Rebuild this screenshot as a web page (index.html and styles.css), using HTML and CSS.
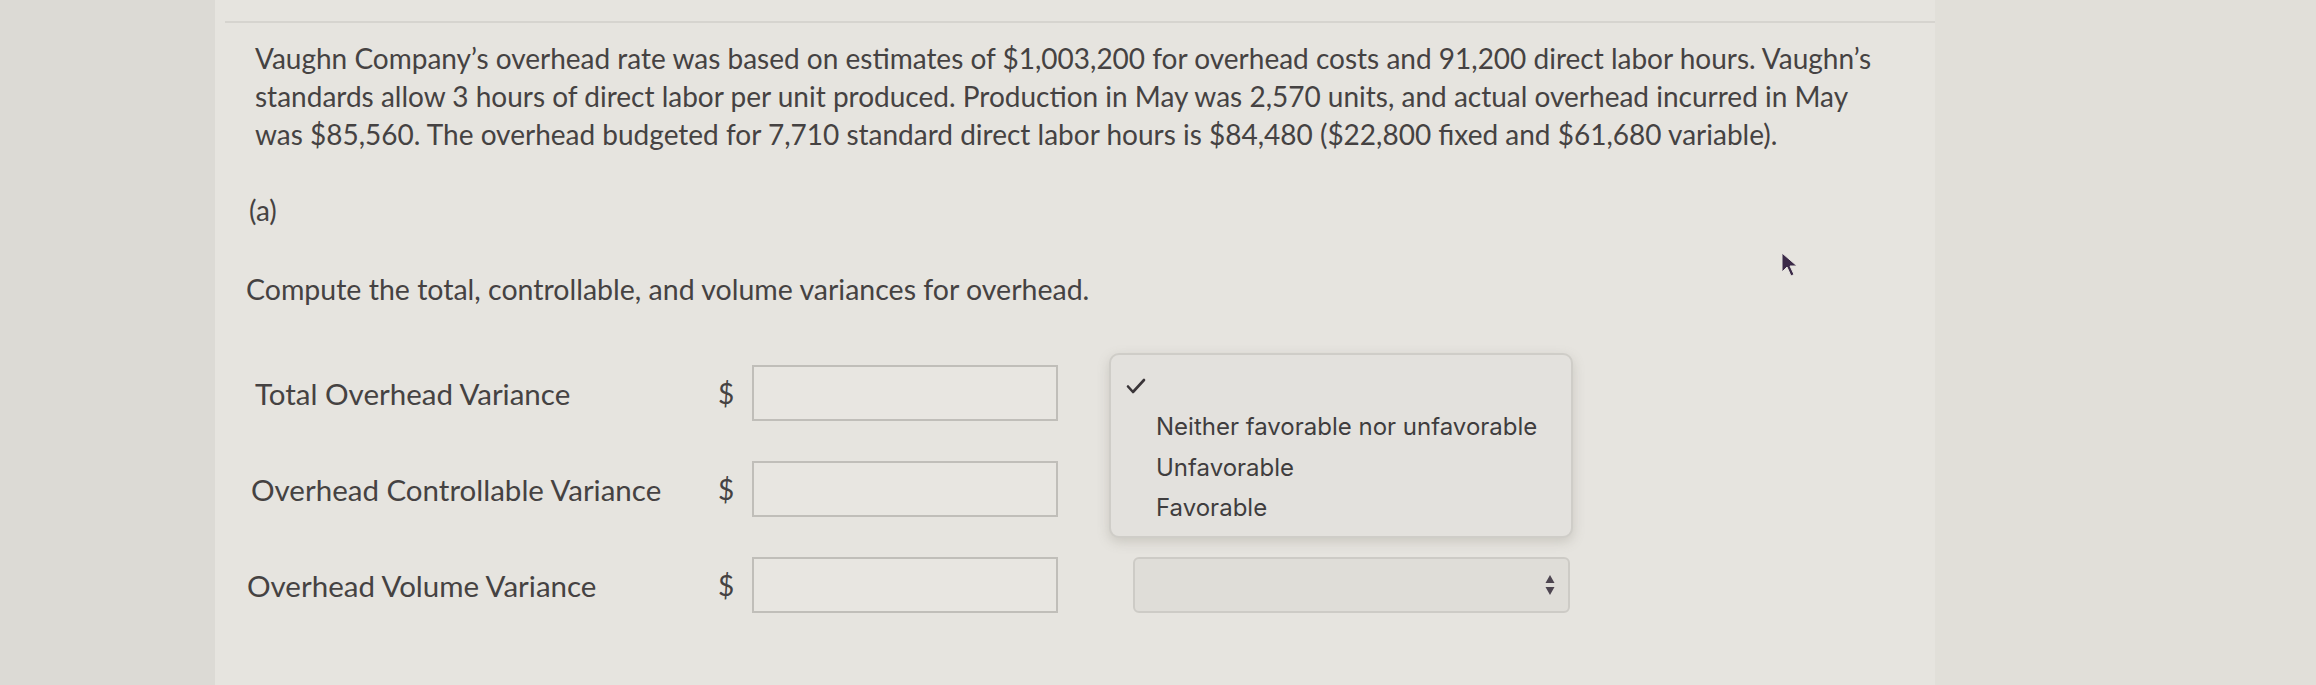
FILE: index.html
```html
<!DOCTYPE html>
<html lang="en">
<head>
<meta charset="utf-8">
<title>Overhead Variances</title>
<link rel="stylesheet" href="styles.css">
</head>
<body>
<div class="screen">
  <div class="strip-left"></div>
  <main class="panel">
    <div class="panel-inner">
      <p class="problem">Vaughn Company’s overhead rate was based on estimates of $1,003,200 for overhead costs and 91,200 direct labor hours. Vaughn’s<br>standards allow 3 hours of direct labor per unit produced. Production in May was 2,570 units, and actual overhead incurred in May<br>was $85,560. The overhead budgeted for 7,710 standard direct labor hours is $84,480 ($22,800 fixed and $61,680 variable).</p>
      <p class="part">(a)</p>
      <p class="instr">Compute the total, controllable, and volume variances for overhead.</p>
      <div class="rows">
        <div class="row">
          <span class="label">Total Overhead Variance</span>
          <span class="cur">$</span>
          <span class="input"></span>
          <span class="select"></span>
        </div>
        <div class="row row-2">
          <span class="label">Overhead Controllable Variance</span>
          <span class="cur">$</span>
          <span class="input"></span>
          <span class="select"></span>
        </div>
        <div class="row row-3">
          <span class="label">Overhead Volume Variance</span>
          <span class="cur">$</span>
          <span class="input"></span>
          <span class="select"><svg class="arrows" width="10" height="22" viewBox="0 0 10 22"><path d="M5 1 L9.5 9 L0.5 9 Z M5 21 L9.5 13 L0.5 13 Z" fill="#4d4550"/></svg></span>
        </div>
        <div class="menu">
          <div class="menu-item checked"><svg class="check" width="20" height="16" viewBox="0 0 20 16"><path d="M2 8.5 L7 14 L18 2" fill="none" stroke="#3a3538" stroke-width="2.6" stroke-linecap="round" stroke-linejoin="round"/></svg></div>
          <div class="menu-item">Neither favorable nor unfavorable</div>
          <div class="menu-item">Unfavorable</div>
          <div class="menu-item">Favorable</div>
        </div>
      </div>
    </div>
    <svg class="pointer" width="20" height="28" viewBox="0 0 20 28"><path d="M2 1 L2 20 L7 15 L11 24 L14 22.5 L10 14 L17 14 Z" fill="#3b2a48" stroke="#e6e4df" stroke-width="1"/></svg>
  </main>
  <div class="strip-right"></div>
</div>
</body>
</html>
```

FILE: styles.css
```css
html, body {
  margin: 0;
  padding: 0;
}
body {
  background: #e3e1dc;
  font-family: Lato, "Open Sans", sans-serif;
  color: #454242;
}
.screen {
  display: flex;
  width: 2316px;
  height: 685px;
  overflow: hidden;
}
.strip-left {
  width: 215px;
  flex: none;
  background: #dcdad5;
}
.panel {
  width: 1720px;
  flex: none;
  background: #e6e4df;
  position: relative;
}
.strip-right {
  flex: 1;
  background: #e1dfd9;
}
.panel-inner {
  margin-top: 21px;
  margin-left: 10px;
  border-top: 2px solid #d6d4cf;
  padding: 16px 0 0 30px;
}
.problem {
  margin: 0;
  font-size: 28px;
  line-height: 38px;
  white-space: nowrap;
}
.part {
  margin: 39px 0 0 -6px;
  font-size: 28px;
  line-height: 37.5px;
}
.instr {
  margin: 41px 0 0 -9px;
  font-size: 28.5px;
  line-height: 37.5px;
}
.rows {
  position: relative;
  margin-top: 57px;
  display: flex;
  flex-direction: column;
  gap: 40px;
}
.row {
  display: flex;
  align-items: center;
  height: 56px;
}
.row-2 .label {
  margin-left: -4px;
  width: 467px;
}
.row-3 .label {
  margin-left: -8px;
  width: 471px;
}
.label {
  width: 463px;
  font-size: 29.5px;
  flex: none;
}
.cur {
  width: 34px;
  font-size: 28px;
  flex: none;
}
.input {
  width: 302px;
  height: 52px;
  border: 2px solid #c0beb9;
  background: #e8e6e1;
  flex: none;
}
.select {
  margin-left: 75px;
  width: 437px;
  height: 56px;
  box-sizing: border-box;
  border: 2px solid #cdcbc6;
  border-radius: 6px;
  background: #dfddd8;
  display: flex;
  align-items: center;
  justify-content: flex-end;
  padding-right: 13px;
  flex: none;
}
.menu {
  position: absolute;
  left: 854px;
  top: -12px;
  width: 464px;
  height: 185px;
  box-sizing: border-box;
  border: 2px solid #cfcdc8;
  border-radius: 10px;
  background: #e3e1dd;
  box-shadow: 0 4px 12px rgba(120, 115, 105, 0.25);
  padding: 10px 0 0 45px;
  font-family: Inter, "Liberation Sans", sans-serif;
  font-size: 24px;
  color: #3f3d3e;
}
.menu-item {
  height: 40.5px;
  line-height: 40.5px;
}
.menu-item.checked {
  height: 42px;
  display: flex;
  align-items: center;
}
.check {
  margin-left: -30px;
}
.pointer {
  position: absolute;
  left: 1565px;
  top: 252px;
}
```
